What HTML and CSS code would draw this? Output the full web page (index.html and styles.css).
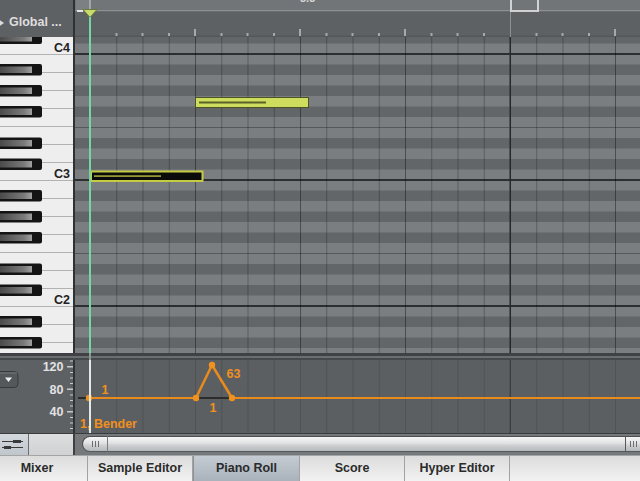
FILE: index.html
```html
<!DOCTYPE html>
<html>
<head>
<meta charset="utf-8">
<link rel="stylesheet" href="styles.css">
</head>
<body>
<div class="app">
  <!-- row 1 -->
  <div class="global">
    <svg class="gtri" width="8" height="10" viewBox="0 0 8 10"><polygon points="0,0 7,5 0,10" fill="#dcdcdc"/></svg>
    <span>Global ...</span>
  </div>
  <div class="vdiv"></div>
  <svg class="ruler" width="565" height="37" viewBox="75 0 565 37">
    <rect x="75" y="0" width="565" height="10" fill="#727578"/>
    <rect x="75" y="10" width="565" height="1.5" fill="#8e9194"/>
    <rect x="75" y="11.5" width="565" height="25.5" fill="#5e6164"/>
    <rect x="75" y="35.5" width="565" height="1.5" fill="#54575a"/>
    <rect x="76" y="0" width="14" height="10" fill="#7d8083"/>
    <text x="300" y="2" class="rtxt">3.3</text>
    <rect x="510" y="12" width="1" height="25" fill="#8c8f92"/>
    <rect x="511" y="-1" width="27" height="12" fill="none" stroke="#d2d2d2" stroke-width="2"/>
    <g fill="#a6a9ac">
      <rect x="115.5" y="33" width="2" height="3"/><rect x="141.5" y="33" width="2" height="3"/><rect x="168" y="33" width="2" height="3"/>
      <rect x="220.5" y="33" width="2" height="3"/><rect x="246.5" y="33" width="2" height="3"/><rect x="273" y="33" width="2" height="3"/>
      <rect x="325.5" y="33" width="2" height="3"/><rect x="351.5" y="33" width="2" height="3"/><rect x="378" y="33" width="2" height="3"/>
      <rect x="430.5" y="33" width="2" height="3"/><rect x="456.5" y="33" width="2" height="3"/><rect x="483" y="33" width="2" height="3"/>
      <rect x="535.5" y="33" width="2" height="3"/><rect x="561.5" y="33" width="2" height="3"/><rect x="588" y="33" width="2" height="3"/>
      <rect x="194" y="29" width="2" height="7"/><rect x="299" y="29" width="2" height="7"/><rect x="404" y="29" width="2" height="7"/><rect x="614" y="29" width="2" height="7"/>
    </g>
  </svg>

  <!-- row 2 -->
  <svg class="keys" width="73" height="316" viewBox="0 37 73 316">
    <defs>
      <linearGradient id="bkg" x1="0" y1="0" x2="1" y2="0">
        <stop offset="0" stop-color="#4a4a4a"/><stop offset="0.75" stop-color="#7a7a7a"/><stop offset="1" stop-color="#a0a0a0"/>
      </linearGradient>
      <pattern id="wk" patternUnits="userSpaceOnUse" x="0" y="54" width="73" height="18">
        <rect width="73" height="18" fill="#eeeeee"/><rect width="73" height="1" fill="#b2b2b2"/>
      </pattern>
      <g id="bkey"><rect x="-3" y="-0.5" width="45" height="11.5" rx="2" fill="#141414"/><rect x="0" y="2" width="32" height="6.5" fill="url(#bkg)"/></g>
      <pattern id="bks" patternUnits="userSpaceOnUse" x="0" y="54" width="73" height="126">
        <use href="#bkey" y="10.5"/><use href="#bkey" y="31.5"/><use href="#bkey" y="52.5"/><use href="#bkey" y="84"/><use href="#bkey" y="105"/>
      </pattern>
    </defs>
    <rect x="0" y="37" width="73" height="316" fill="url(#wk)"/>
    <rect x="0" y="37" width="73" height="316" fill="url(#bks)"/>
    <text x="70" y="52" class="ck">C4</text>
    <text x="70" y="178" class="ck">C3</text>
    <text x="70" y="304" class="ck">C2</text>
  </svg>
  <div class="vdiv"></div>
  <svg class="roll" width="565" height="316" viewBox="75 37 565 316">
    <defs>
      <pattern id="oct" patternUnits="userSpaceOnUse" x="0" y="54" width="640" height="126">
        <rect width="640" height="126" fill="#7b7e81"/>
        <rect y="10.5" width="640" height="10.5" fill="#636669"/>
        <rect y="31.5" width="640" height="10.5" fill="#636669"/>
        <rect y="52.5" width="640" height="10.5" fill="#636669"/>
        <rect y="84" width="640" height="10.5" fill="#636669"/>
        <rect y="105" width="640" height="10.5" fill="#636669"/>
        <rect y="73" width="640" height="1" fill="#56595c"/>
        <rect y="0" width="640" height="1" fill="#2c2e30"/>
        <rect y="125" width="640" height="1" fill="#2c2e30"/>
      </pattern>
      <pattern id="s16" patternUnits="userSpaceOnUse" x="90" y="0" width="26.25" height="481">
        <rect width="1" height="481" fill="#000" fill-opacity="0.26"/>
      </pattern>
    </defs>
    <rect x="75" y="37" width="565" height="316" fill="url(#oct)"/>
    <rect x="75" y="37" width="565" height="316" fill="url(#s16)"/>
    <g fill="#000" fill-opacity="0.18">
      <rect x="195" y="37" width="1" height="316"/><rect x="300" y="37" width="1" height="316"/>
      <rect x="405" y="37" width="1" height="316"/><rect x="615" y="37" width="1" height="316"/>
    </g>
    <rect x="509.5" y="37" width="1.5" height="316" fill="#26282a"/>
    <!-- notes -->
    <rect x="195.5" y="97.5" width="113" height="10" fill="#cedd5e" stroke="#4d5424" stroke-width="1"/>
    <rect x="199" y="101.5" width="67" height="2" fill="#5b6229"/>
    <rect x="91" y="171.5" width="111.5" height="9.5" fill="#0b0b0b" stroke="#c5cc42" stroke-width="2"/>
    <rect x="94" y="175.3" width="67" height="1.6" fill="#a5a83c"/>
  </svg>

  <!-- row 3 -->
  <div class="sep"></div>

  <!-- row 4 -->
  <svg class="ctl-left" width="73" height="73" viewBox="0 360 73 73">
    <rect x="0" y="360" width="73" height="73" fill="#5e6164"/>
    <rect x="-4" y="371.5" width="22" height="16" rx="4" fill="#55585b" stroke="#37393b"/>
    <rect x="-3" y="372.5" width="20" height="1" fill="#74777a"/>
    <polygon points="5,377.5 12,377.5 8.5,382" fill="#eeeeee"/>
    <text x="63.5" y="371" class="sc">120</text>
    <text x="63.5" y="393.5" class="sc">80</text>
    <text x="63.5" y="416" class="sc">40</text>
    <g fill="#c9c9c9">
      <rect x="67" y="366" width="6" height="1.5"/><rect x="67" y="388.5" width="6" height="1.5"/><rect x="67" y="411" width="6" height="1.5"/>
      <rect x="70" y="360.5" width="3" height="1"/><rect x="70" y="372" width="3" height="1"/><rect x="70" y="377.5" width="3" height="1"/><rect x="70" y="383" width="3" height="1"/>
      <rect x="70" y="394.5" width="3" height="1"/><rect x="70" y="400" width="3" height="1"/><rect x="70" y="405.5" width="3" height="1"/>
      <rect x="70" y="417" width="3" height="1"/><rect x="70" y="422.5" width="3" height="1"/><rect x="70" y="428" width="3" height="1"/>
    </g>
  </svg>
  <div class="vdiv"></div>
  <svg class="ctl" width="565" height="73" viewBox="75 360 565 73">
    <defs>
      <pattern id="c16" patternUnits="userSpaceOnUse" x="90" y="0" width="26.25" height="481">
        <rect width="1" height="481" fill="#000" fill-opacity="0.13"/>
      </pattern>
    </defs>
    <rect x="75" y="360" width="565" height="73" fill="#5c5f62"/>
    <rect x="75" y="360" width="565" height="73" fill="url(#c16)"/>
    <rect x="509.5" y="360" width="1.5" height="73" fill="#000" fill-opacity="0.25"/>
    <rect x="78" y="397" width="11" height="2" fill="#2a2a2a"/>
    <line x1="88" y1="398" x2="640" y2="398" stroke="#e98b1c" stroke-width="2"/>
    <line x1="197" y1="398" x2="231" y2="398" stroke="#2c2c2c" stroke-width="2"/>
    <polyline points="196,398 212,365 232,398" fill="none" stroke="#e98b1c" stroke-width="2.5" stroke-linejoin="round"/>
    <g fill="#f0921f">
      <circle cx="89" cy="398" r="3.2"/><circle cx="196" cy="398" r="3.2"/>
      <circle cx="212" cy="365" r="3.2"/><circle cx="232" cy="398" r="3.2"/>
    </g>
    <text x="101.5" y="394" class="ol">1</text>
    <text x="226.5" y="378" class="ol">63</text>
    <text x="209.5" y="412" class="ol">1</text>
    <text x="80" y="428" class="ol">1, Bender</text>
  </svg>

  <!-- row 5 -->
  <div class="scrollrow">
    <div class="sr-icon">
      <svg width="28" height="20" viewBox="0 0 28 20">
        <rect x="2" y="6" width="21" height="1" fill="#3a3a3a"/>
        <rect x="13" y="5" width="8" height="3" fill="#3a3a3a"/>
        <rect x="2" y="12" width="21" height="1" fill="#3a3a3a"/>
        <rect x="4" y="11" width="7" height="3" fill="#3a3a3a"/>
      </svg>
    </div>
    <div class="sr-blank"></div>
    <div class="sr-track">
      <div class="cap-l"><span class="grip"></span></div>
      <div class="thumb"></div>
      <div class="cap-r"><span class="grip"></span></div>
    </div>
  </div>

  <!-- row 6 -->
  <nav class="tabs">
    <div class="tab tab-first">Mixer</div>
    <div class="tab">Sample Editor</div>
    <div class="tab tab-active">Piano Roll</div>
    <div class="tab">Score</div>
    <div class="tab">Hyper Editor</div>
    <div class="tab-rest"></div>
  </nav>

  <!-- playhead overlay -->
  <div class="ph-top"></div>
  <div class="ph-tick"></div>
  <svg class="ph-head" width="16" height="9" viewBox="0 0 16 9"><polygon points="1,0.5 15,0.5 8,8.5" fill="#c9d96c" stroke="#6b7a3a" stroke-width="1"/></svg>
  <div class="ph-line"></div>
</div>
</body>
</html>
```

FILE: styles.css
```css
* { box-sizing: border-box; }
html, body { margin: 0; padding: 0; }
body {
  width: 640px;
  height: 481px;
  overflow: hidden;
  background: #5a5d60;
  font-family: "Liberation Sans", Arial, sans-serif;
}
.app {
  position: relative;
  display: grid;
  grid-template-columns: 73px 2px 565px;
  grid-template-rows: 37px 316px 7px 73px 22px 26px;
  width: 640px;
  height: 481px;
  overflow: hidden;
}
svg { display: block; }
.vdiv { background: #2f3133; }

.global {
  background: #5e6164;
  display: flex;
  align-items: flex-start;
  gap: 4px;
  padding-top: 15px;
  margin-left: -1px;
  color: #dedede;
  font-weight: bold;
  font-size: 12.5px;
  line-height: 14px;
  white-space: nowrap;
  overflow: hidden;
}
.gtri { margin-top: 3px; margin-left: -2px; }

.rtxt { font-family: "Liberation Sans", Arial, sans-serif; font-size: 11px; font-weight: bold; fill: #d8d8d8; }
.ck { font-family: "Liberation Sans", Arial, sans-serif; font-size: 12.5px; font-weight: bold; fill: #222; text-anchor: end; }
.sc { font-family: "Liberation Sans", Arial, sans-serif; font-size: 12.5px; font-weight: bold; fill: #e2e2e2; text-anchor: end; }
.ol { font-family: "Liberation Sans", Arial, sans-serif; font-size: 12.5px; font-weight: bold; fill: #f0901e; }

.sep {
  grid-column: 1 / -1;
  background: linear-gradient(to bottom, #3f4144 0, #3f4144 3px, #6b6e71 3px, #6b6e71 5px, #46494c 5px);
}

.scrollrow {
  grid-column: 1 / -1;
  display: flex;
  border-top: 1px solid #3a3c3e;
  background: #7c7f82;
}
.sr-icon {
  width: 29px;
  background: linear-gradient(#d4d9de, #bfc6cc);
  border-right: 1px solid #6a6d70;
  display: flex;
  align-items: center;
}
.sr-blank {
  width: 44px;
  background: linear-gradient(#dcdedf, #cfd1d3);
}
.sr-track {
  flex: 1;
  display: flex;
  padding: 2px 0 3px 7px;
  border-left: 2px solid #3e4043;
  background: #76797c;
}
.cap-l, .thumb, .cap-r {
  background: linear-gradient(#f6f6f6 0%, #e0e1e2 45%, #cdcfd1 60%, #b6b9bc 100%);
  border-top: 1px solid #4c4e50;
  border-bottom: 1px solid #55585a;
}
.cap-l {
  width: 26px;
  border-left: 1px solid #4c4e50;
  border-right: 1px solid #7a7c7e;
  border-radius: 8px 0 0 8px;
  display: flex;
  align-items: center;
  justify-content: center;
}
.thumb { flex: 1; }
.cap-r {
  width: 15px;
  border-left: 1px solid #55585a;
  display: flex;
  align-items: center;
  justify-content: center;
}
.grip {
  width: 7px;
  height: 6px;
  background: repeating-linear-gradient(90deg, #6a6c6e 0 1px, transparent 1px 3px);
}

.tabs {
  grid-column: 1 / -1;
  display: flex;
  background: linear-gradient(#dcdcdc, #f2f2f2);
  border-top: 1px solid #a4a4a4;
}
.tab {
  flex: none;
  width: 105px;
  border-right: 1px solid #a2a2a2;
  text-align: center;
  font-weight: bold;
  font-size: 12.5px;
  line-height: 25px;
  color: #2b2b2b;
  white-space: nowrap;
}
.tab-first { width: 101px; margin-left: -13px; }
.tab-active {
  width: 107px;
  background: linear-gradient(#c4cbd2, #a9b2bb);
  border-left: 1px solid #8c9298;
}
.tab-rest { flex: 1; }

.ph-top {
  position: absolute;
  left: 89px; top: 0;
  width: 2px; height: 10px;
  background: #a3a6a9;
}
.ph-tick {
  position: absolute;
  left: 77px; top: 10px;
  width: 6px; height: 2px;
  background: #e4e4e4;
}
.ph-head {
  position: absolute;
  left: 82px; top: 9px;
}
.ph-line {
  position: absolute;
  left: 89px; top: 17px;
  width: 2px; height: 416px;
  background: linear-gradient(to bottom, #74d6a6 0, #74d6a6 336px, #8a9a92 336px, #8a9a92 343px, #e2eae6 343px);
}
```
